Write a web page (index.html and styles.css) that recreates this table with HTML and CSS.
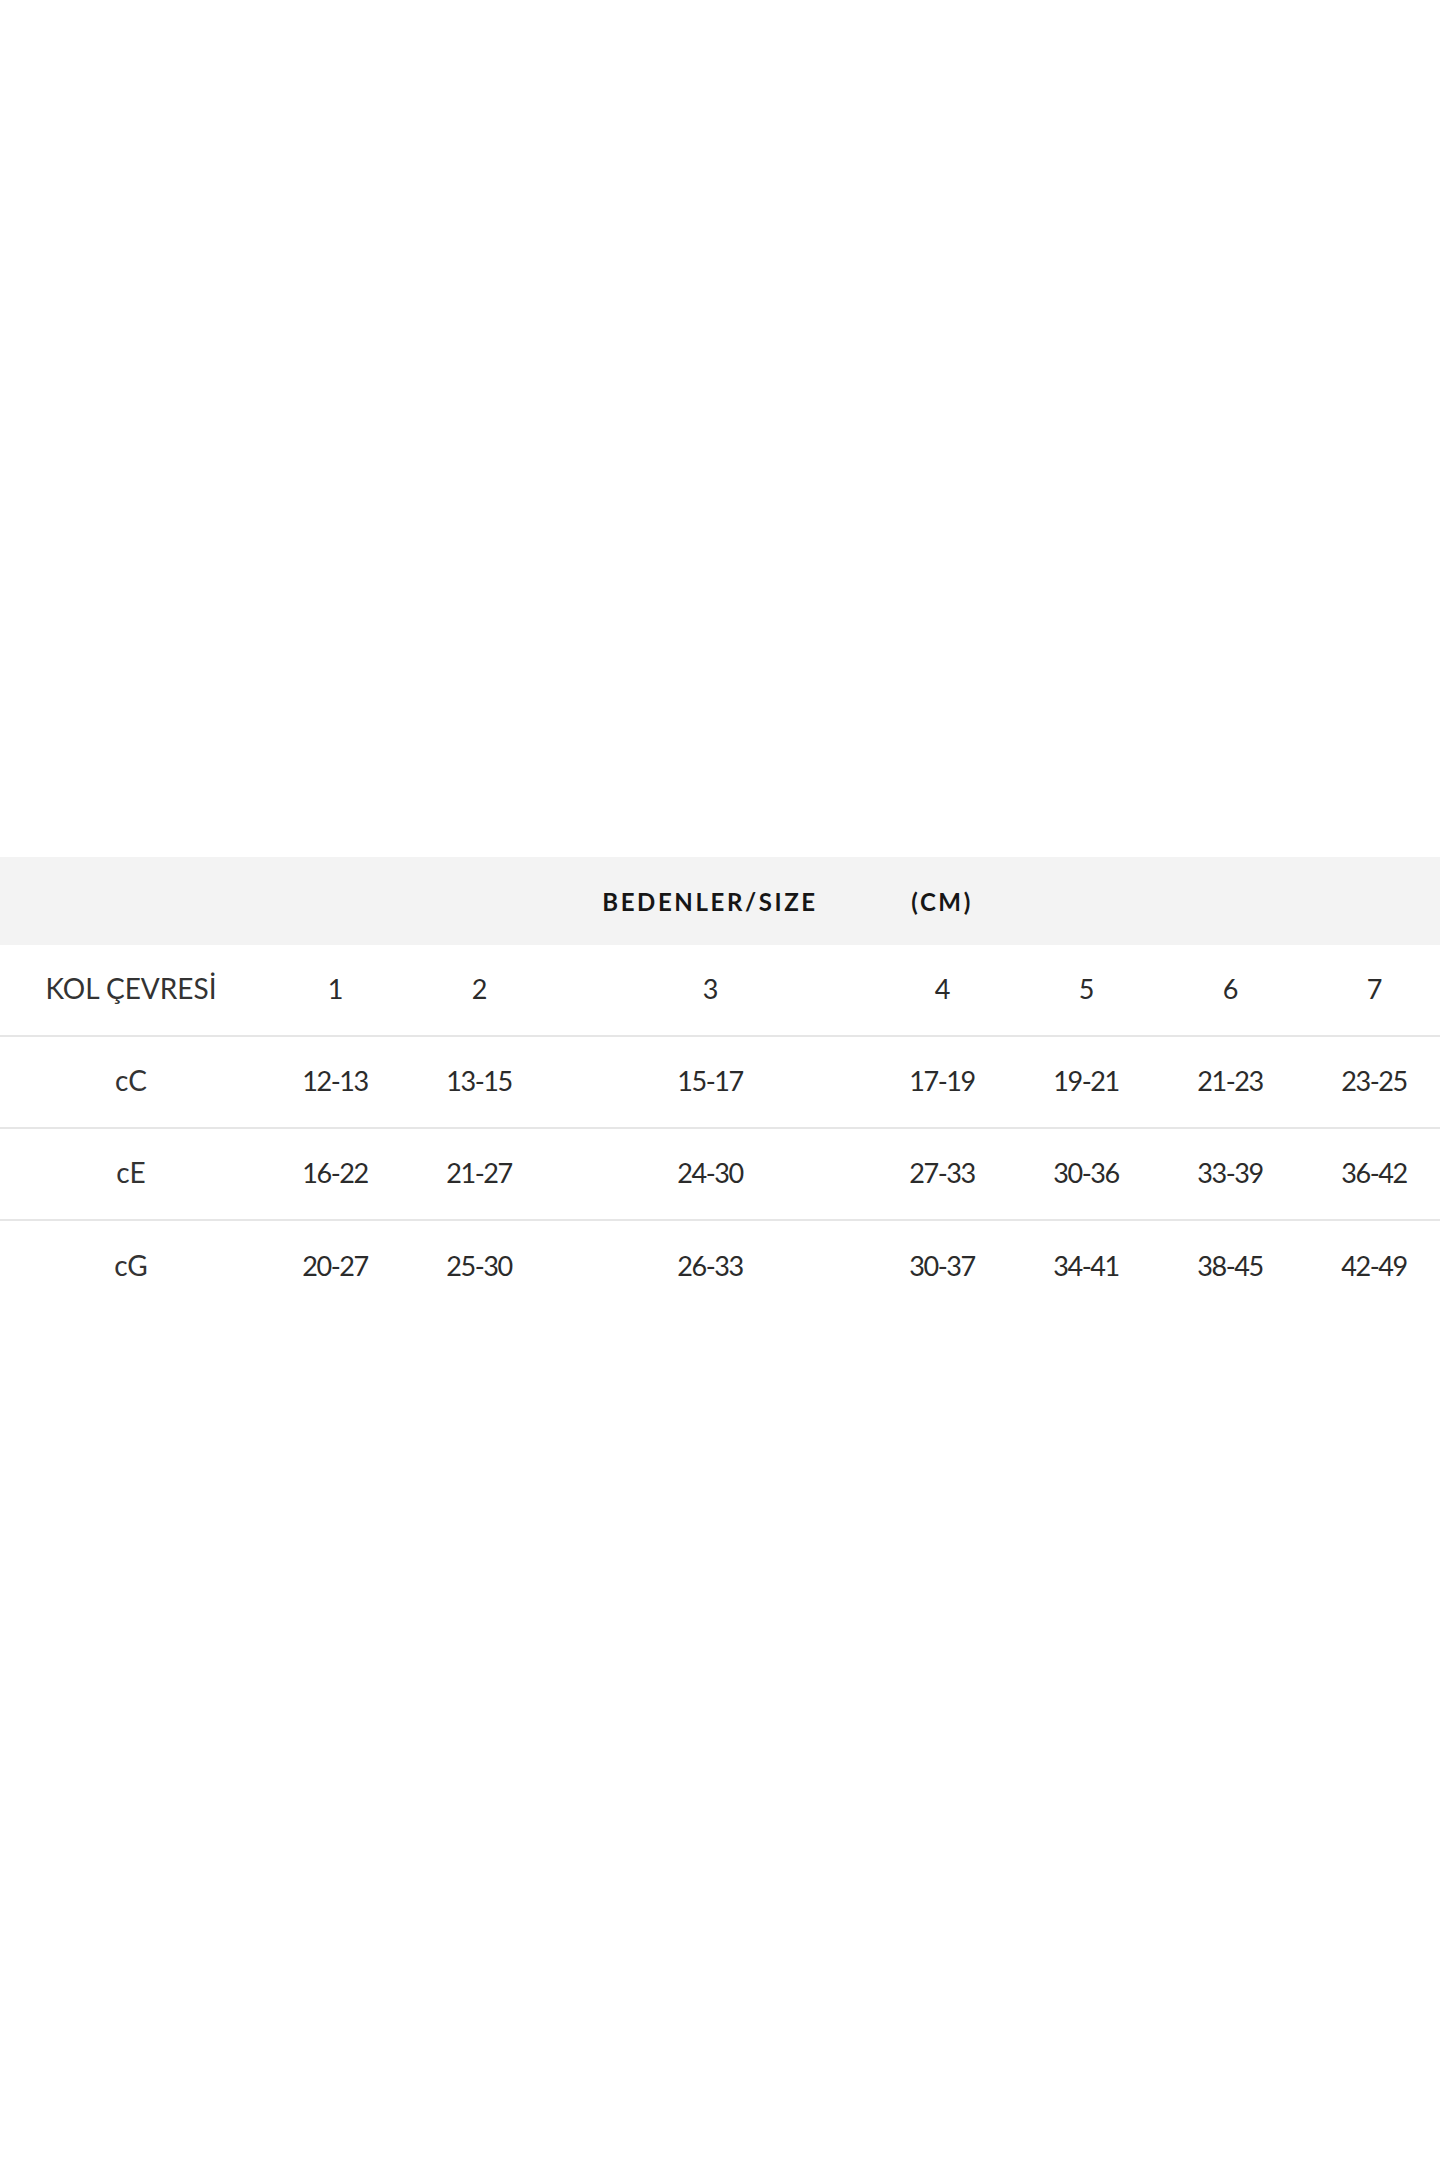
FILE: index.html
```html
<!DOCTYPE html>
<html lang="tr">
<head>
<meta charset="utf-8">
<title>Beden Tablosu</title>
<link rel="stylesheet" href="styles.css">
</head>
<body>
<main class="page">
  <table class="size-table">
    <colgroup>
      <col class="c-label">
      <col class="c-one">
      <col class="c-two">
      <col class="c-wide">
      <col class="c-num">
      <col class="c-num">
      <col class="c-num">
      <col class="c-num">
    </colgroup>
    <thead>
      <tr class="head-row">
        <th></th><th></th><th></th>
        <th>BEDENLER/SIZE</th>
        <th>(CM)</th>
        <th></th><th></th><th></th>
      </tr>
    </thead>
    <tbody>
      <tr class="row">
        <td class="label">KOL ÇEVRESİ</td>
        <td class="num">1</td><td class="num">2</td><td class="num">3</td><td class="num">4</td><td class="num">5</td><td class="num">6</td><td class="num">7</td>
      </tr>
      <tr class="row">
        <td class="label">cC</td>
        <td class="num">12-13</td><td class="num">13-15</td><td class="num">15-17</td><td class="num">17-19</td><td class="num">19-21</td><td class="num">21-23</td><td class="num">23-25</td>
      </tr>
      <tr class="row">
        <td class="label">cE</td>
        <td class="num">16-22</td><td class="num">21-27</td><td class="num">24-30</td><td class="num">27-33</td><td class="num">30-36</td><td class="num">33-39</td><td class="num">36-42</td>
      </tr>
      <tr class="row last">
        <td class="label">cG</td>
        <td class="num">20-27</td><td class="num">25-30</td><td class="num">26-33</td><td class="num">30-37</td><td class="num">34-41</td><td class="num">38-45</td><td class="num">42-49</td>
      </tr>
    </tbody>
  </table>
</main>
</body>
</html>
```

FILE: styles.css
```css
html, body {
  margin: 0;
  padding: 0;
  background: #ffffff;
}

body {
  font-family: "Lato", "Open Sans", "Liberation Sans", sans-serif;
  color: #2e2e2e;
}

.page {
  width: 1440px;
  min-height: 2160px;
  overflow: hidden;
  padding-top: 857px;
  box-sizing: border-box;
}

.size-table {
  width: 1446px;
  table-layout: fixed;
  border-collapse: collapse;
  border-spacing: 0;
}

.c-label { width: 262px; }
.c-one { width: 146px; }
.c-two { width: 142px; }
.c-wide { width: 320px; }
.c-num { width: 144px; }

.head-row th {
  height: 88px;
  padding: 0;
  background: #f3f3f3;
  font-family: "Lato", "Open Sans", sans-serif;
  font-weight: 700;
  font-size: 24px;
  letter-spacing: 2.6px;
  color: #161616;
  text-align: center;
  vertical-align: middle;
  white-space: nowrap;
}

.row td {
  height: 86px;
  padding: 0 0 4px 0;
  text-align: center;
  vertical-align: middle;
  border-bottom: 2px solid #e6e6e6;
  white-space: nowrap;
}

.row.last td {
  border-bottom: none;
  height: 88px;
}

.label {
  font-family: "Lato", "Open Sans", sans-serif;
  font-size: 28px;
  font-weight: 400;
  color: #333333;
}

.num {
  font-family: "Lato", "Open Sans", sans-serif;
  font-size: 27px;
  font-weight: 400;
  letter-spacing: -1.4px;
  color: #2b2b2b;
}
```
